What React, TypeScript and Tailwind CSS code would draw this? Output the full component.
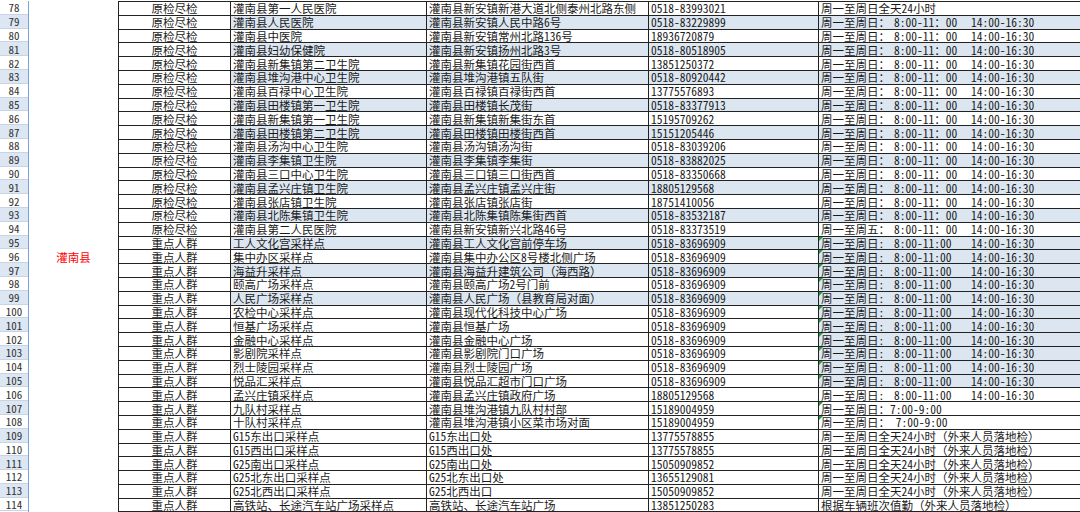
import React from "react";

// 行データ: [行番号, 区分, 名称, 住所, 電話, 時間]
type Row = {
  no: number;
  kind: string;
  name: string;
  addr: string;
  tel: string;
  time: React.ReactNode;
};

const T1 = "周一至周日全天24小时";
const T3 = "周一至周日全天24小时（外来人员落地检）";

// 8:00-11:00 14:00-16:30 形式の時間表示
const Hours = ({
  head = "周一至周日：",
  mid = "8:00-11：00",
}: {
  head?: string;
  mid?: string;
}) => (
  <span className="flex whitespace-pre">
    <span className="w-[73px] shrink-0">{head}</span>
    <span className="w-[77px] shrink-0">{mid}</span>
    <span>14:00-16:30</span>
  </span>
);

const hospitals: [string, string, string][] = [
  ["灌南县人民医院", "灌南县新安镇人民中路6号", "0518-83229899"],
  ["灌南县中医院", "灌南县新安镇常州北路136号", "18936720879"],
  ["灌南县妇幼保健院", "灌南县新安镇扬州北路3号", "0518-80518905"],
  ["灌南县新集镇第二卫生院", "灌南县新集镇花园街西首", "13851250372"],
  ["灌南县堆沟港中心卫生院", "灌南县堆沟港镇五队街", "0518-80920442"],
  ["灌南县百禄中心卫生院", "灌南县百禄镇百禄街西首", "13775576893"],
  ["灌南县田楼镇第一卫生院", "灌南县田楼镇长茂街", "0518-83377913"],
  ["灌南县新集镇第一卫生院", "灌南县新集镇新集街东首", "15195709262"],
  ["灌南县田楼镇第二卫生院", "灌南县田楼镇田楼街西首", "15151205446"],
  ["灌南县汤沟中心卫生院", "灌南县汤沟镇汤沟街", "0518-83039206"],
  ["灌南县李集镇卫生院", "灌南县李集镇李集街", "0518-83882025"],
  ["灌南县三口中心卫生院", "灌南县三口镇三口街西首", "0518-83350668"],
  ["灌南县孟兴庄镇卫生院", "灌南县孟兴庄镇孟兴庄街", "18805129568"],
  ["灌南县张店镇卫生院", "灌南县张店镇张店街", "18751410056"],
  ["灌南县北陈集镇卫生院", "灌南县北陈集镇陈集街西首", "0518-83532187"],
];

const points: [string, string][] = [
  ["工人文化宫采样点", "灌南县工人文化宫前停车场"],
  ["集中办区采样点", "灌南县集中办公区8号楼北侧广场"],
  ["海益升采样点", "灌南县海益升建筑公司（海西路）"],
  ["颐高广场采样点", "灌南县颐高广场2号门前"],
  ["人民广场采样点", "灌南县人民广场（县教育局对面）"],
  ["农检中心采样点", "灌南县现代化科技中心广场"],
  ["恒基广场采样点", "灌南县恒基广场"],
  ["金融中心采样点", "灌南县金融中心广场"],
  ["影剧院采样点", "灌南县影剧院门口广场"],
  ["烈士陵园采样点", "灌南县烈士陵园广场"],
  ["悦品汇采样点", "灌南县悦品汇超市门口广场"],
];

const rows: Row[] = [
  {
    no: 78,
    kind: "原检尽检",
    name: "灌南县第一人民医院",
    addr: "灌南县新安镇新港大道北侧泰州北路东侧",
    tel: "0518-83993021",
    time: T1,
  },
  ...hospitals.map(([name, addr, tel], i) => ({
    no: 79 + i,
    kind: "原检尽检",
    name,
    addr,
    tel,
    time: <Hours />,
  })),
  {
    no: 94,
    kind: "原检尽检",
    name: "灌南县第二人民医院",
    addr: "灌南县新安镇新兴北路46号",
    tel: "0518-83373519",
    time: <Hours head="周一至周五：" />,
  },
  ...points.map(([name, addr], i) => ({
    no: 95 + i,
    kind: "重点人群",
    name,
    addr,
    tel: "0518-83696909",
    time: <Hours head="周一至周日:" mid="8:00-11:00" />,
  })),
  {
    no: 106,
    kind: "重点人群",
    name: "孟兴庄镇采样点",
    addr: "灌南县孟兴庄镇政府广场",
    tel: "18805129568",
    time: <Hours head="周一至周日:" mid="8:00-11:00" />,
  },
  {
    no: 107,
    kind: "重点人群",
    name: "九队村采样点",
    addr: "灌南县堆沟港镇九队村村部",
    tel: "15189004959",
    time: "周一至周日：7:00-9:00",
  },
  {
    no: 108,
    kind: "重点人群",
    name: "十队村采样点",
    addr: "灌南县堆沟港镇小区菜市场对面",
    tel: "15189004959",
    time: "周一至周日： 7:00-9:00",
  },
  { no: 109, kind: "重点人群", name: "G15东出口采样点", addr: "G15东出口处", tel: "13775578855", time: T3 },
  { no: 110, kind: "重点人群", name: "G15西出口采样点", addr: "G15西出口处", tel: "13775578855", time: T3 },
  { no: 111, kind: "重点人群", name: "G25南出口采样点", addr: "G25南出口处", tel: "15050909852", time: T3 },
  { no: 112, kind: "重点人群", name: "G25北东出口采样点", addr: "G25北东出口处", tel: "13655129081", time: T3 },
  { no: 113, kind: "重点人群", name: "G25北西出口采样点", addr: "G25北西出口", tel: "15050909852", time: T3 },
  {
    no: 114,
    kind: "重点人群",
    name: "高铁站、长途汽车站广场采样点",
    addr: "高铁站、长途汽车站广场",
    tel: "13851250283",
    time: "根据车辆班次值勤（外来人员落地检）",
  },
];

const isOdd = (n: number) => n % 2 === 1;
// 名称・住所・電話の塗り
const dataBlue = (n: number) => isOdd(n) && n <= 99;
// 時間列の塗り
const timeBlue = (n: number) => (isOdd(n) && n <= 93) || (n >= 95 && n <= 105);
// 緑の三角マーク
const hasMark = (n: number) => (n >= 95 && n <= 105) || n === 107 || n === 108;

const Cell = ({
  blue,
  center,
  children,
}: {
  blue?: boolean;
  center?: boolean;
  children: React.ReactNode;
}) => (
  <div
    className={`relative flex items-center whitespace-pre border-l border-[#222] px-[2px] ${
      center ? "justify-center" : ""
    } ${blue ? "bg-[#dce6f1]" : "bg-white"}`}
  >
    {children}
  </div>
);

export default function App() {
  return (
    <div className="w-[1080px] h-[512px] overflow-hidden bg-white text-[#1a1a1a] font-['Noto_Sans_Mono_CJK_SC','Noto_Sans_CJK_SC',sans-serif] text-[11.5px] leading-[12px]">
      <div className="flex pt-[1px]">
        {/* 行番号 */}
        <div className="w-[29px] shrink-0 border-r border-[#7aa4da]">
          {rows.map((r) => (
            <div
              key={r.no}
              className={`flex h-[13.8px] items-center justify-center border-b border-[#c8d4e3] text-[11px] text-[#333] ${
                isOdd(r.no) ? "bg-[#dde7f3]" : "bg-white"
              }`}
            >
              {r.no}
            </div>
          ))}
        </div>

        {/* 地区（結合セル） */}
        <div className="flex w-[89px] shrink-0 items-center justify-center text-[#ff0000]">
          灌南县
        </div>

        {/* 明細 */}
        <div className="flex-1 border-t border-[#222]">
          {rows.map((r) => (
            <div
              key={r.no}
              className="grid h-[13.8px] grid-cols-[112px_196px_222px_170px_1fr] border-b border-[#222]"
            >
              <Cell center>{r.kind}</Cell>
              <Cell blue={dataBlue(r.no)}>{r.name}</Cell>
              <Cell blue={dataBlue(r.no)}>{r.addr}</Cell>
              <Cell blue={dataBlue(r.no)}>{r.tel}</Cell>
              <Cell blue={timeBlue(r.no)}>
                {hasMark(r.no) && (
                  <span className="absolute left-0 top-0 h-0 w-0 border-r-[4px] border-t-[4px] border-r-transparent border-t-[#1f9d3a]" />
                )}
                {r.time}
              </Cell>
            </div>
          ))}
        </div>
      </div>
    </div>
  );
}
